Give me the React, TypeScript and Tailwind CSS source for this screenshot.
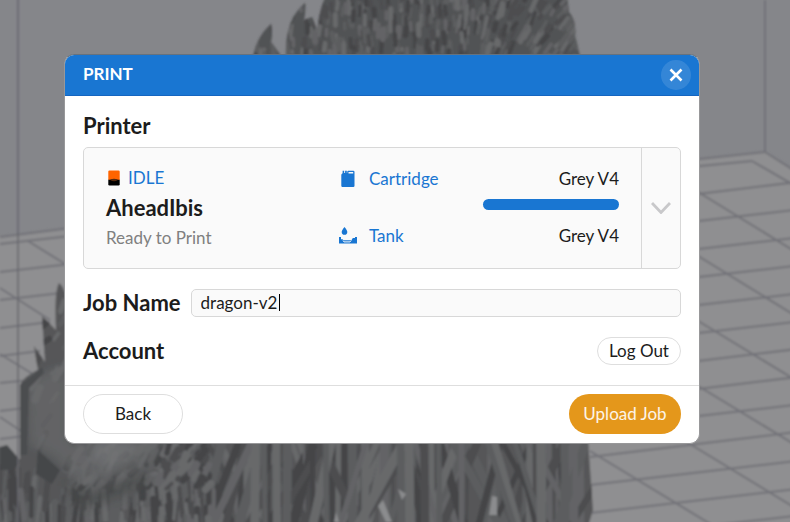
import { useState } from "react";

type Line = [number, number, number, number];

const gridLines: Line[] = [
  [765, 0, 765, 152], [690, 160, 765, 152], [765, 152, 830, 193],
  [690, 167, 752, 161], [752, 161, 830, 206],
  [690, 195, 830, 178], [690, 222, 830, 206], [690, 250, 830, 234], [690, 278, 830, 262],
  [690, 306, 830, 290], [690, 334, 830, 318], [690, 362, 830, 345], [690, 390, 830, 373],
  [690, 417, 830, 401], [590, 457, 830, 428], [590, 485, 830, 457], [590, 513, 830, 485],
  [690, 528, 830, 512],
  [690, 187, 830, 273], [690, 251, 830, 337], [690, 316, 830, 401], [690, 381, 830, 466],
  [685, 441, 830, 529], [590, 451, 712, 525],
  [0, 237, 70, 228], [0, 244, 70, 236], [0, 272, 70, 264], [0, 300, 70, 292],
  [0, 328, 50, 322], [0, 356, 40, 351], [0, 383, 30, 380], [0, 411, 25, 408], [0, 439, 25, 436],
  [28, 241, 70, 267], [0, 288, 50, 320], [0, 354, 36, 376], [0, 417, 24, 433],
];

function makeRandom(seed: number) {
  let s = seed;
  return () => {
    s = (s * 16807) % 2147483647;
    return s / 2147483647;
  };
}

const tones = ["#444547", "#4d4e50", "#5c5d5f", "#68696b", "#636466"];

function makeScales() {
  const r = makeRandom(41);
  return Array.from({ length: 420 }, () => {
    const x = 250 + r() * 335;
    const y = r() * 70 - 4;
    const lean = (x > 460 ? (x - 460) / 14 : 0) + (r() - 0.5) * 3;
    return { x, y, dx: lean, dy: -6 - r() * 6, w: 2.5 + r() * 3, c: tones[Math.floor(r() * tones.length)] };
  });
}

function makeSupports() {
  const r = makeRandom(97);
  return Array.from({ length: 130 }, (_, i) => {
    const x = 190 + r() * 400;
    const lean = i % 2 === 0 ? (r() - 0.5) * 3 : (r() < 0.5 ? -1 : 1) * (20 + r() * 40);
    return { x, dx: lean, w: 5 + r() * 5, c: tones[Math.floor(r() * tones.length)] };
  });
}

function makeFur() {
  const r = makeRandom(7);
  return Array.from({ length: 200 }, () => {
    const x = r() * 215;
    const y = 465 + r() * 60;
    return { x, y, dx: (r() - 0.5) * 8, dy: 28, w: 3 + r() * 4, c: tones[Math.floor(r() * tones.length)] };
  });
}

function makeHide() {
  const r = makeRandom(63);
  return Array.from({ length: 150 }, () => {
    const x = 26 + r() * 180;
    const y = (x < 66 ? 310 : 445) + r() * (x < 66 ? 140 : 45);
    return { x, y, dx: 3 + r() * 5, dy: -4 - r() * 8, w: 3 + r() * 5, c: tones[Math.floor(r() * tones.length)] };
  });
}

const scales = makeScales();
const supports = makeSupports();
const fur = makeFur();
const hide = makeHide();

function Scene() {
  return (
    <svg
      className="absolute inset-0 h-full w-full"
      viewBox="0 0 790 522"
      preserveAspectRatio="xMidYMid slice"
      aria-hidden="true"
    >
      <defs>
        <filter id="soft" x="-5%" y="-5%" width="110%" height="110%">
          <feGaussianBlur stdDeviation="1.3" />
        </filter>
        <filter id="softer" x="-5%" y="-5%" width="110%" height="110%">
          <feGaussianBlur stdDeviation="5" />
        </filter>
        <clipPath id="crest">
          <path d="M253 60 Q255 38 271 24 Q273 34 271 42 L280 54 V60Z M286 60 Q284 20 305 3 Q306 12 304 20 L312 17 L317 30 Q320 8 326 -5 H567 L569 12 Q577 22 575 36 L581 60Z" />
        </clipPath>
        <clipPath id="body">
          <path d="M-5 448 L7 445 L20 460 V385 Q24 376 38 370 L34 346 L45 362 L42 316 L56 330 Q54 292 59 283 Q66 288 68 310 V440 H588 L593 510 L587 530 H-5Z" />
        </clipPath>
      </defs>
      <rect width="790" height="522" fill="#85868a" />
      <g filter="url(#soft)">
        <path d="M-10 238 L70 228 L690 160 L765 152 L830 193 V540 H-10Z" fill="#8f8f91" />
        {gridLines.map(([x1, y1, x2, y2], i) => (
          <line key={i} x1={x1} y1={y1} x2={x2} y2={y2} stroke="#727278" strokeWidth="2" />
        ))}
        <g clipPath="url(#crest)">
          <rect x="240" y="-10" width="350" height="75" fill="#515254" />
          {scales.map((s, i) => (
            <line key={i} x1={s.x} y1={s.y} x2={s.x + s.dx} y2={s.y + s.dy} stroke={s.c} strokeWidth={s.w} strokeLinecap="round" />
          ))}
        </g>
        <g clipPath="url(#body)">
          <rect x="-10" y="270" width="620" height="265" fill="#565759" />
          {supports.map((s, i) => (
            <line key={i} x1={s.x} y1={530} x2={s.x + s.dx} y2={435} stroke={s.c} strokeWidth={s.w} />
          ))}
          {fur.map((s, i) => (
            <line key={i} x1={s.x} y1={s.y} x2={s.x + s.dx} y2={s.y + s.dy} stroke={s.c} strokeWidth={s.w} strokeLinecap="round" />
          ))}
          {hide.map((s, i) => (
            <line key={i} x1={s.x} y1={s.y} x2={s.x + s.dx} y2={s.y + s.dy} stroke={s.c} strokeWidth={s.w} strokeLinecap="round" />
          ))}
          <g filter="url(#softer)" opacity="0.75">
            <path d="M28 385 Q44 370 68 366 V440 H160 Q155 470 110 476 Q84 490 66 470 Q56 452 30 445Z" fill="#68696b" />
            <path d="M92 440 H138 Q128 462 104 470 Q90 462 92 440Z" fill="#77787a" />
            <path d="M64 470 Q76 490 88 494 Q120 482 148 470 L144 486 Q110 500 84 508 Q66 494 64 470Z" fill="#474849" />
          </g>
          <path d="M20 385 L42 367 L44 373 L29 388 L27 455 H20Z" fill="#4c4d50" />
          <path d="M0 448 L7 445 L20 460 L14 470 H0Z M38 450 L60 470 L52 484 L36 474Z" fill="#454648" />
        </g>
        <path d="M383 500 L392 522 H386 L378 506Z M398 489 L406 494 L402 500Z M492 496 L497 497 V515 H489Z M336 512 L339 522 H334Z" fill="#8b8c8e" />
        <line x1="18" y1="-4" x2="18" y2="526" stroke="#68686e" strokeWidth="2" opacity="0.8" />
      </g>
    </svg>
  );
}

function CartridgeIcon() {
  return (
    <svg className="h-[18px] w-[18px] shrink-0" viewBox="0 0 18 18" aria-hidden="true">
      <path
        fill="#1976d2"
        fillRule="evenodd"
        d="M3.600 0.800h1.600V3h.9V0.800h1.700V3h.4V2Q8.200.8 9.400.8H14.300q1.200 0 1.200 1.200v13.800q0 1.200-1.200 1.200H3.500q-1.200 0-1.200-1.200V5q0-1.200 1.300-1.700ZM9.500 2.100v1.300h4.700V2.100Z"
      />
    </svg>
  );
}

function TankIcon() {
  return (
    <svg className="h-[18px] w-[18px] shrink-0" viewBox="0 0 18 18" aria-hidden="true">
      <path d="M5.500 0Q8.300 3.500 8.300 4.900a2.800 2.800 0 0 1-5.600 0Q2.700 3.500 5.500 0Z" fill="#1976d2" />
      <path d="M0 10h2v2.300h1.500l1 1H12.500l1.300-2.300H16v-1h2v6.500H0Z" fill="#1976d2" />
      <path d="M4 13.600 5 14.900H11l1.200-1.300" fill="none" stroke="#fafafa" strokeWidth="1" />
    </svg>
  );
}

function PrinterIcon() {
  return (
    <svg className="h-4 w-4 shrink-0" viewBox="0 0 16 16" aria-hidden="true">
      <path d="M3.500 0.500h9q1.200 0 1.200 1.200V10H2.300V1.700Q2.300.5 3.500.5Z" fill="#ff6400" />
      <path d="M2.300 9.800h11.400v4.500q0 1.200-1.200 1.200h-9q-1.200 0-1.200-1.200Z" fill="#000" />
      <path d="M4.500 9.300Q8 8.300 11.500 9.300v1Q8 12 4.500 10.300Z" fill="#54290f" />
    </svg>
  );
}

export default function App() {
  const [jobName, setJobName] = useState("dragon-v2");
  return (
    <main className="relative min-h-screen overflow-hidden bg-[#85868a] pt-[54px] pr-[90px] pb-10 pl-16 font-['Lato','Open_Sans',sans-serif] text-[17px] leading-6 text-[#1c1c1c]">
      <Scene />
      <section
        role="dialog"
        aria-labelledby="dialog-title"
        className="relative overflow-hidden rounded-[10px] border border-[#98989a] border-t-[#66727e] bg-white"
      >
        <header className="flex h-[41px] items-center justify-between border-b border-[#1565c0] bg-[#1976d2] pr-2 pl-[18px] text-white">
          <h1 id="dialog-title" className="pb-[2px] font-bold">PRINT</h1>
          <button type="button" aria-label="Close" className="flex size-[30px] items-center justify-center rounded-full bg-white/12">
            <svg className="size-[14px]" viewBox="0 0 14 14" aria-hidden="true">
              <path d="M1.500 1.500 12.500 12.500M12.500 1.500 1.500 12.500" stroke="#fff" strokeWidth="2.600" />
            </svg>
          </button>
        </header>

        <div className="px-[18px] pt-4 pb-5">
          <h2 className="text-[22px] leading-7 font-bold">Printer</h2>
          <div className="mt-[7px] flex rounded-[5px] border border-[#d8d8d8] bg-[#fafafa]">
            <div className="flex flex-1 justify-between py-[15px] pr-[22px] pl-[22px]">
              <div className="leading-[30px]">
                <p className="flex items-center gap-[6px] text-[#1976d2]">
                  <PrinterIcon />
                  IDLE
                </p>
                <p className="text-[22px] leading-[30px] font-bold">AheadIbis</p>
                <p className="text-[#808080]">Ready to Print</p>
              </div>
              <dl className="w-[280px] pt-1">
                <div className="flex justify-between">
                  <dt className="flex items-center gap-3 text-[#1976d2]">
                    <CartridgeIcon />
                    Cartridge
                  </dt>
                  <dd>Grey V4</dd>
                </div>
                <div
                  role="progressbar"
                  aria-label="Cartridge level"
                  aria-valuenow={100}
                  className="mt-2 ml-auto h-[11px] w-[136px] rounded-full bg-[#1976d2]"
                />
                <div className="mt-[14px] flex justify-between">
                  <dt className="flex items-center gap-3 text-[#1976d2]">
                    <TankIcon />
                    Tank
                  </dt>
                  <dd>Grey V4</dd>
                </div>
              </dl>
            </div>
            <button type="button" aria-label="Choose printer" className="flex w-[39px] items-center justify-center border-l border-[#d8d8d8]">
              <svg className="h-3 w-5" viewBox="0 0 20 12" aria-hidden="true">
                <path d="M1 1 10 10.500 19 1" fill="none" stroke="#c8c8ca" strokeWidth="2.800" />
              </svg>
            </button>
          </div>

          <div className="mt-5 flex items-center gap-[10px]">
            <label htmlFor="job-name" className="text-[22px] leading-7 font-bold">Job Name</label>
            <div className="relative flex-1">
              <input
                id="job-name"
                value={jobName}
                onChange={(e) => setJobName(e.target.value)}
                className="block h-7 w-full rounded-[5px] border border-[#d8d8d8] bg-[#fafafa] px-[9px] pb-[2px] outline-none"
              />
              <span className="absolute top-[5px] left-[88px] h-[17px] w-px bg-black" />
            </div>
          </div>

          <div className="mt-5 flex items-center justify-between">
            <h2 className="text-[22px] leading-7 font-bold">Account</h2>
            <button type="button" className="h-7 w-[84px] rounded-full border border-[#dedede] bg-white leading-6">
              Log Out
            </button>
          </div>
        </div>

        <footer className="flex justify-between border-t border-[#dedede] px-[18px] pt-2 pb-[9px]">
          <button type="button" className="h-10 w-[100px] rounded-full border border-[#dedede] bg-white">Back</button>
          <button type="button" className="h-10 w-28 rounded-full bg-[#e4971b] text-white/90">Upload Job</button>
        </footer>
      </section>
    </main>
  );
}
